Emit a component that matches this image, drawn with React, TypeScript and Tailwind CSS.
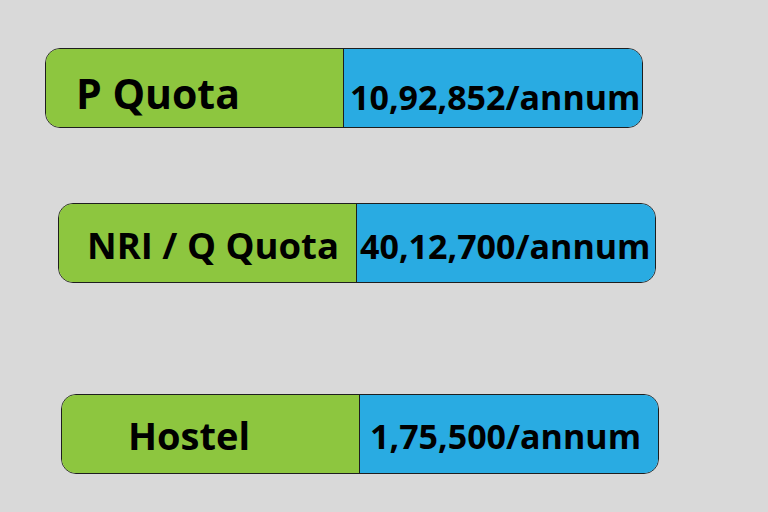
import React from "react";

export default function App() {
  const font = { fontFamily: '"Open Sans", "Liberation Sans", sans-serif' };
  return (
    <div className="w-[768px] h-[512px] bg-[#d9d9d9] overflow-hidden flex flex-col pt-[48px]" style={font}>
      {/* Row 1 */}
      <div className="ml-[45px] w-[598px] h-[80px] flex rounded-[15px] border border-[#1e1e1e] overflow-hidden">
        <div className="w-[298px] shrink-0 h-full bg-[#8dc63f] border-r border-[#1e1e1e] flex items-center pl-[30px] pt-[10px]">
          <span className="text-[41px] font-bold text-black leading-none">P Quota</span>
        </div>
        <div className="flex-1 min-w-0 h-full bg-[#29abe2] flex items-center pl-[6px] pt-[18px]">
          <span className="text-[34px] font-bold text-black leading-none whitespace-nowrap">10,92,852/annum</span>
        </div>
      </div>

      {/* Row 2 */}
      <div className="ml-[58px] mt-[75px] w-[598px] h-[80px] flex rounded-[15px] border border-[#1e1e1e] overflow-hidden">
        <div className="w-[298px] shrink-0 h-full bg-[#8dc63f] border-r border-[#1e1e1e] flex items-center pl-[28px] pt-[4px]">
          <span className="text-[36.5px] font-bold text-black leading-none whitespace-nowrap">NRI / Q Quota</span>
        </div>
        <div className="flex-1 min-w-0 h-full bg-[#29abe2] flex items-center pl-[3px] pt-[6px]">
          <span className="text-[34px] font-bold text-black leading-none whitespace-nowrap">40,12,700/annum</span>
        </div>
      </div>

      {/* Row 3 */}
      <div className="ml-[61px] mt-[111px] w-[598px] h-[80px] flex rounded-[15px] border border-[#1e1e1e] overflow-hidden">
        <div className="w-[298px] shrink-0 h-full bg-[#8dc63f] border-r border-[#1e1e1e] flex items-center pl-[66px] pt-[2px]">
          <span className="text-[38px] font-bold text-black leading-none">Hostel</span>
        </div>
        <div className="flex-1 min-w-0 h-full bg-[#29abe2] flex items-center pl-[10px] pt-[4px]">
          <span className="text-[34px] font-bold text-black leading-none whitespace-nowrap">1,75,500/annum</span>
        </div>
      </div>
    </div>
  );
}
